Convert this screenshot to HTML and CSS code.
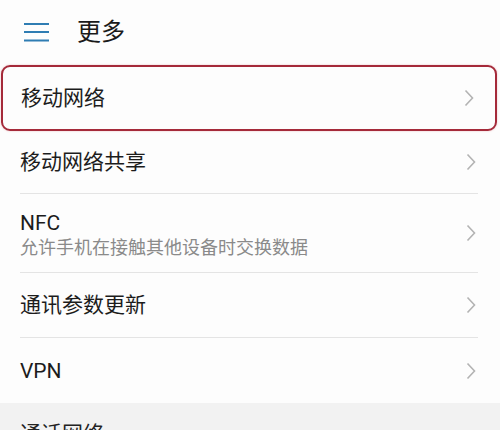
FILE: index.html
```html
<!DOCTYPE html>
<html lang="zh-CN">
<head>
<meta charset="utf-8">
<link rel="stylesheet" href="styles.css">
</head>
<body>
<div class="screen">
  <header class="topbar">
    <svg class="menu-icon" width="26" height="20" viewBox="0 0 26 20">
      <path d="M0 2 H25 M0 10 H25 M0 18.5 H25" stroke="#2f7db3" stroke-width="2.2" fill="none"/>
    </svg>
    <h1 class="title">更多</h1>
  </header>

  <div class="list">
    <div class="row selected">
      <div class="row-inner">
        <span class="label">移动网络</span>
        <svg class="chev" width="10" height="18" viewBox="0 0 10 18"><path d="M1.5 1.5 L8.5 9 L1.5 16.5" fill="none" stroke="#b3b3b3" stroke-width="1.6"/></svg>
      </div>
    </div>
    <div class="row">
      <div class="row-inner divided h64">
        <span class="label">移动网络共享</span>
        <svg class="chev" width="10" height="18" viewBox="0 0 10 18"><path d="M1.5 1.5 L8.5 9 L1.5 16.5" fill="none" stroke="#b3b3b3" stroke-width="1.6"/></svg>
      </div>
    </div>
    <div class="row">
      <div class="row-inner divided h79">
        <div class="texts">
          <span class="label">NFC</span>
          <span class="sub">允许手机在接触其他设备时交换数据</span>
        </div>
        <svg class="chev" width="10" height="18" viewBox="0 0 10 18"><path d="M1.5 1.5 L8.5 9 L1.5 16.5" fill="none" stroke="#b3b3b3" stroke-width="1.6"/></svg>
      </div>
    </div>
    <div class="row">
      <div class="row-inner divided h65">
        <span class="label">通讯参数更新</span>
        <svg class="chev" width="10" height="18" viewBox="0 0 10 18"><path d="M1.5 1.5 L8.5 9 L1.5 16.5" fill="none" stroke="#b3b3b3" stroke-width="1.6"/></svg>
      </div>
    </div>
    <div class="row">
      <div class="row-inner h65">
        <span class="label">VPN</span>
        <svg class="chev" width="10" height="18" viewBox="0 0 10 18"><path d="M1.5 1.5 L8.5 9 L1.5 16.5" fill="none" stroke="#b3b3b3" stroke-width="1.6"/></svg>
      </div>
    </div>
  </div>

  <div class="section">
    <span class="section-label">通话网络</span>
  </div>
</div>
</body>
</html>
```

FILE: styles.css
```css
html, body {
  margin: 0;
  padding: 0;
  background: #fdfdfd;
}
body {
  font-family: Roboto, "Noto Sans CJK SC", sans-serif;
  color: #1c1c1c;
  width: 500px;
  height: 430px;
  overflow: hidden;
}
.screen {
  width: 500px;
}
.topbar {
  height: 65px;
  display: flex;
  align-items: center;
  padding-left: 24px;
  box-sizing: border-box;
}
.menu-icon {
  display: block;
  margin-top: -2px;
}
.title {
  margin: -2px 0 0 27px;
  font-size: 24px;
  font-weight: 400;
  line-height: 1;
  color: #1a1a1a;
}
.list {
  display: flex;
  flex-direction: column;
}
.row {
  display: block;
}
.row-inner {
  display: flex;
  align-items: center;
  justify-content: space-between;
  margin: 0 22px 0 20px;
  box-sizing: border-box;
}
.row-inner.divided {
  border-bottom: 1px solid #e4e4e4;
}
.row.selected {
  margin: 0 3px 0 1px;
  border: 2px solid #a52a3a;
  border-radius: 9px;
  box-shadow: 0 0 2px rgba(200, 60, 70, 0.35);
  height: 66px;
  box-sizing: border-box;
  display: flex;
}
.row.selected .row-inner {
  flex: 1;
  margin: 0 19px 0 18px;
}
.h64 { height: 63px; }
.h79 { height: 79px; }
.h65 { height: 65px; }
.label {
  font-size: 21px;
  line-height: 26px;
  color: #1c1c1c;
}
.texts {
  display: flex;
  flex-direction: column;
  margin-top: 4px;
}
.sub {
  font-size: 18px;
  line-height: 24px;
  color: #8a8a8a;
}
.chev {
  display: block;
  flex: none;
  margin-right: 2px;
}
.section {
  background: #f2f2f2;
  height: 60px;
  padding: 18px 0 0 20px;
  box-sizing: border-box;
}
.section-label {
  font-size: 21px;
  line-height: 26px;
  color: #222;
}
```
